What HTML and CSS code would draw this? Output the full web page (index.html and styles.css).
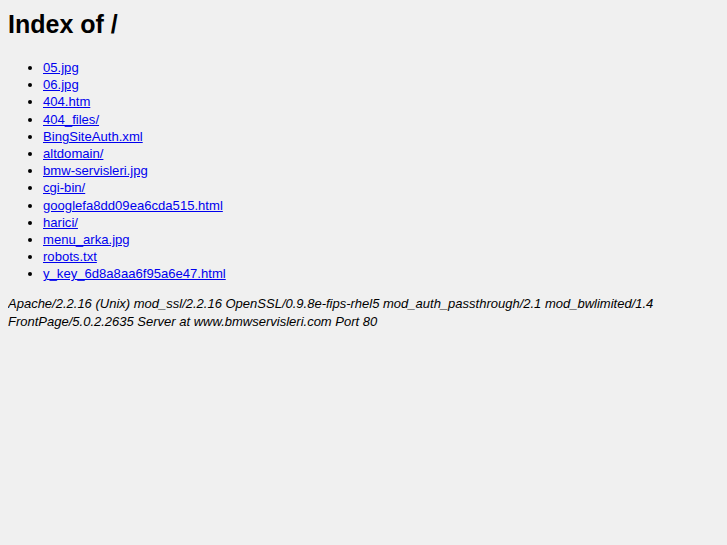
FILE: index.html
```html
<!DOCTYPE html>
<html>
<head>
<meta charset="utf-8">
<title>Index of /</title>
<link rel="stylesheet" href="styles.css">
</head>
<body>
<h1 class="title">Index of /</h1>
<ul class="listing">
<li><a href="#">05.jpg</a></li>
<li><a href="#">06.jpg</a></li>
<li><a href="#">404.htm</a></li>
<li><a href="#">404_files/</a></li>
<li><a href="#">BingSiteAuth.xml</a></li>
<li><a href="#">altdomain/</a></li>
<li><a href="#">bmw-servisleri.jpg</a></li>
<li><a href="#">cgi-bin/</a></li>
<li><a href="#">googlefa8dd09ea6cda515.html</a></li>
<li><a href="#">harici/</a></li>
<li><a href="#">menu_arka.jpg</a></li>
<li><a href="#">robots.txt</a></li>
<li><a href="#">y_key_6d8a8aa6f95a6e47.html</a></li>
</ul>
<address class="sig">Apache/2.2.16 (Unix) mod_ssl/2.2.16 OpenSSL/0.9.8e-fips-rhel5 mod_auth_passthrough/2.1 mod_bwlimited/1.4 FrontPage/5.0.2.2635 Server at www.bmwservisleri.com Port 80</address>
</body>
</html>
```
FILE: styles.css
```css
html {
  background: #f0f0f0;
}
body {
  margin: 8px;
  font-family: "Liberation Sans", Arial, sans-serif;
  font-size: 13px;
  color: #000;
}
.title {
  font-size: 25px;
  font-weight: bold;
  margin: 1px 0 20px;
  line-height: 30px;
}
.listing {
  margin: 0 0 12px;
  padding-left: 35px;
  line-height: 17.2px;
}
.listing a {
  color: #0000ee;
  font-size: 13.1px;
}
.sig {
  font-style: italic;
  line-height: 18px;
  max-width: 660px;
}
```
